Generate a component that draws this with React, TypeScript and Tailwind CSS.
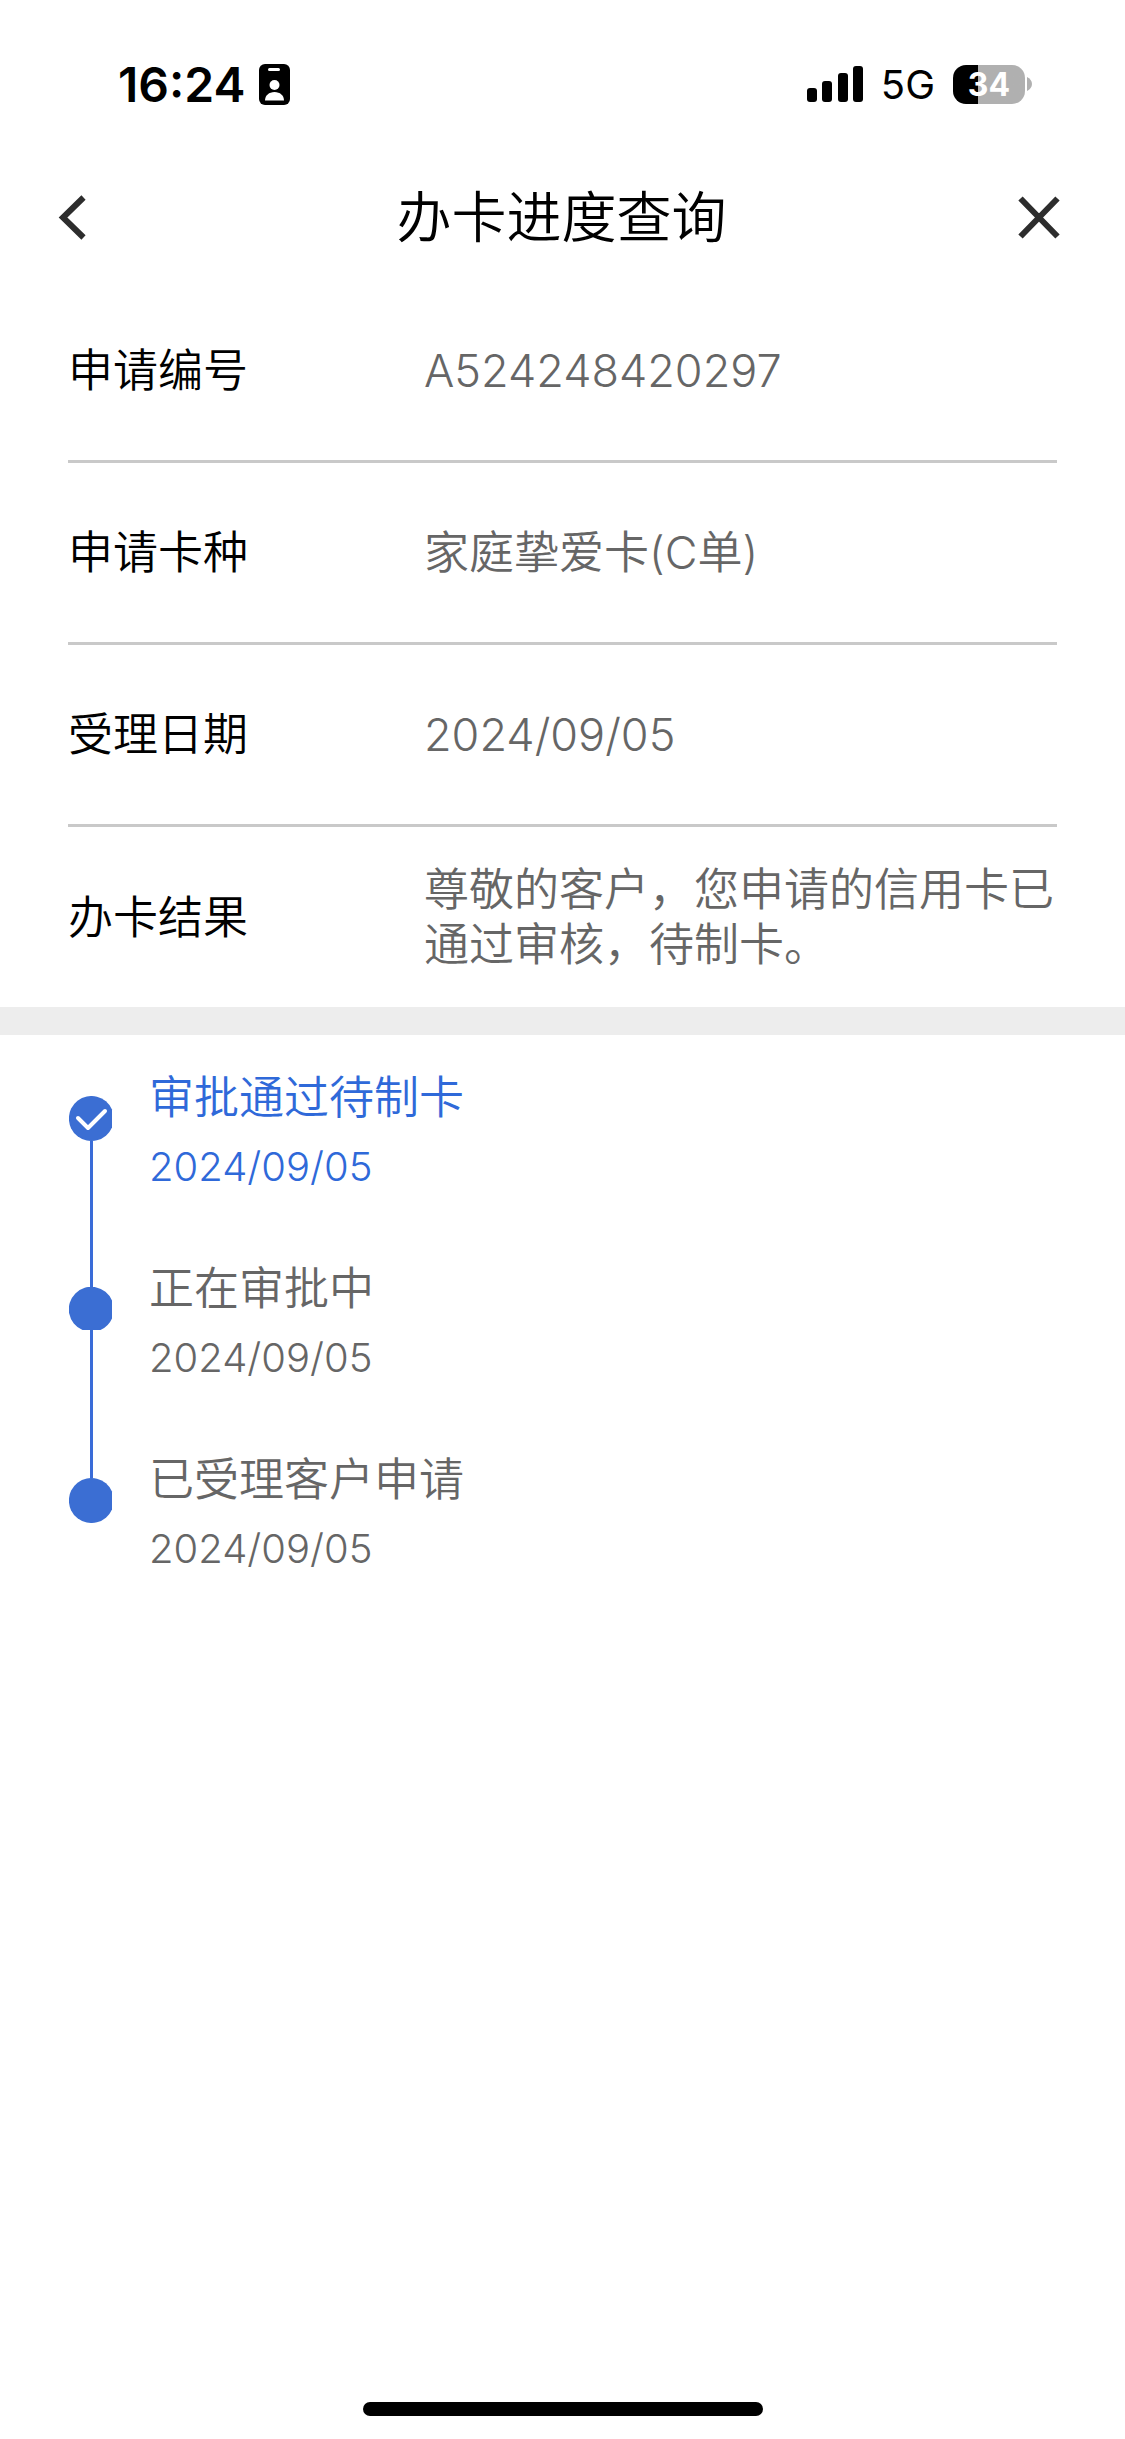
import React from "react";

interface InfoRowProps {
  label: string;
  value: string;
}

interface StepProps {
  title: string;
  date: string;
  first: boolean;
  last: boolean;
}

const infos = [
  { label: "申请编号", value: "A524248420297" },
  { label: "申请卡种", value: "家庭挚爱卡(C单)" },
  { label: "受理日期", value: "2024/09/05" },
  { label: "办卡结果", value: "尊敬的客户，您申请的信用卡已通过审核，待制卡。" },
];

const steps = [
  { title: "审批通过待制卡", date: "2024/09/05" },
  { title: "正在审批中", date: "2024/09/05" },
  { title: "已受理客户申请", date: "2024/09/05" },
];

function StatusBar() {
  return (
    <div className="flex h-[153px] items-center justify-between pt-[15px] pl-[118px] pr-[93px] text-black">
      <div className="flex items-center gap-[14px]">
        <span className="text-[48px] leading-[55px] font-semibold">16:24</span>
        <svg width="31" height="41" viewBox="0 0 31 41" aria-hidden="true">
          <rect width="31" height="41" rx="6" fill="#000" />
          <rect x="9" y="4" width="12" height="3" rx="1.5" fill="#fff" />
          <circle cx="15.5" cy="21" r="5" fill="#fff" />
          <path d="M6 36.5c0-5 4-8.500 9.500-8.500s9.500 3.500 9.500 8.500z" fill="#fff" />
        </svg>
      </div>
      <div className="flex items-center gap-[18px]">
        <svg width="56" height="36" viewBox="0 0 56 36" aria-hidden="true">
          <rect x="0" y="22" width="10" height="14" rx="3" />
          <rect x="15" y="15" width="10" height="21" rx="3" />
          <rect x="31" y="7" width="10" height="29" rx="3" />
          <rect x="46" y="0" width="10" height="36" rx="3" />
        </svg>
        <span className="text-[40px] leading-[55px]">5G</span>
        <div className="flex items-center gap-[2px]">
          <div className="flex h-[39px] w-[72px] items-center justify-center rounded-[13px] bg-linear-to-r from-black from-[35%] to-[#b0b0b0] to-[35%]">
            <span className="text-[32px] leading-[39px] font-bold text-white">34</span>
          </div>
          <svg width="5" height="14" viewBox="0 0 5 14" aria-hidden="true">
            <path d="M0 0c3 1.500 5 4 5 7s-2 5.500-5 7z" fill="#b0b0b0" />
          </svg>
        </div>
      </div>
    </div>
  );
}

function NavBar() {
  return (
    <header className="flex h-[128px] items-center justify-between pl-[58px] pr-[63px]">
      <button type="button" aria-label="返回">
        <svg width="48" height="45" viewBox="0 0 48 45" fill="none" stroke="#2d2d2d" strokeWidth="6">
          <path d="M25.500 2.500 5 22.500l20.500 20" />
        </svg>
      </button>
      <h1 className="text-[55px] leading-[64px] font-[350] text-black">办卡进度查询</h1>
      <button type="button" aria-label="关闭">
        <svg width="45" height="45" viewBox="0 0 45 45" fill="none" stroke="#2d2d2d" strokeWidth="6">
          <path d="M3.500 3.500l37 38M40.500 3.500l-37 38" />
        </svg>
      </button>
    </header>
  );
}

function InfoRow({ label, value }: InfoRowProps) {
  return (
    <div className="flex h-[182px] items-center border-b-[3px] border-[#c9c9c9] last:h-[180px] last:border-b-0">
      <dt className="w-[356px] shrink-0 text-black">{label}</dt>
      <dd className="flex-1 text-[#666]">{value}</dd>
    </div>
  );
}

function Step({ title, date, first, last }: StepProps) {
  return (
    <li className={`flex h-[191px] gap-[35px] ${first ? "text-[#2f69d9]" : "text-[#666]"}`}>
      <div className="flex w-[45px] flex-col items-center">
        <div className={`h-[26px] w-[3px] ${first ? "" : "bg-[#3a6cd8]"}`} />
        <svg width="45" height="45" viewBox="0 0 45 45" fill="none" aria-hidden="true">
          {/* the dot is cut flat on its right side, the middle one at the bottom too */}
          {first || last ? (
            <path d="M43 13.500A22.500 22.500 0 1 0 43 31.500z" fill="#3b6ed3" />
          ) : (
            <path d="M43 13.500A22.500 22.500 0 1 0 13.500 43H21v2h3v-2h7.500A22.500 22.500 0 0 0 43 31.500z" fill="#3b6ed3" />
          )}
          {first && (
            <path d="M9 22l10 10 17-17" stroke="#fff" strokeWidth="4" strokeLinecap="round" strokeLinejoin="round" />
          )}
        </svg>
        <div className={`w-[3px] flex-1 ${last ? "" : "bg-[#3a6cd8]"}`} />
      </div>
      <div>
        <p className="text-[45px] leading-[55px]">{title}</p>
        <p className="mt-[14px] text-[40px] leading-[55px]">{date}</p>
      </div>
    </li>
  );
}

function App() {
  return (
    <div className="flex min-h-screen flex-col bg-white font-['Inter','Noto_Sans_CJK_SC',sans-serif]">
      <StatusBar />
      <NavBar />
      <main className="font-[350]">
        <dl className="px-[68px] text-[45px] leading-[55px]">
          {infos.map((info) => (
            <InfoRow key={info.label} {...info} />
          ))}
        </dl>
        <div className="h-[28px] bg-[#ededed]" />
        <ol className="pt-[35px] pl-[69px]">
          {steps.map((step, i) => (
            <Step key={step.title} {...step} first={i === 0} last={i === steps.length - 1} />
          ))}
        </ol>
      </main>
      <div className="mt-auto flex justify-center pb-[23px]">
        <div className="h-[14px] w-[400px] rounded-full bg-black" />
      </div>
    </div>
  );
}

export default App;
